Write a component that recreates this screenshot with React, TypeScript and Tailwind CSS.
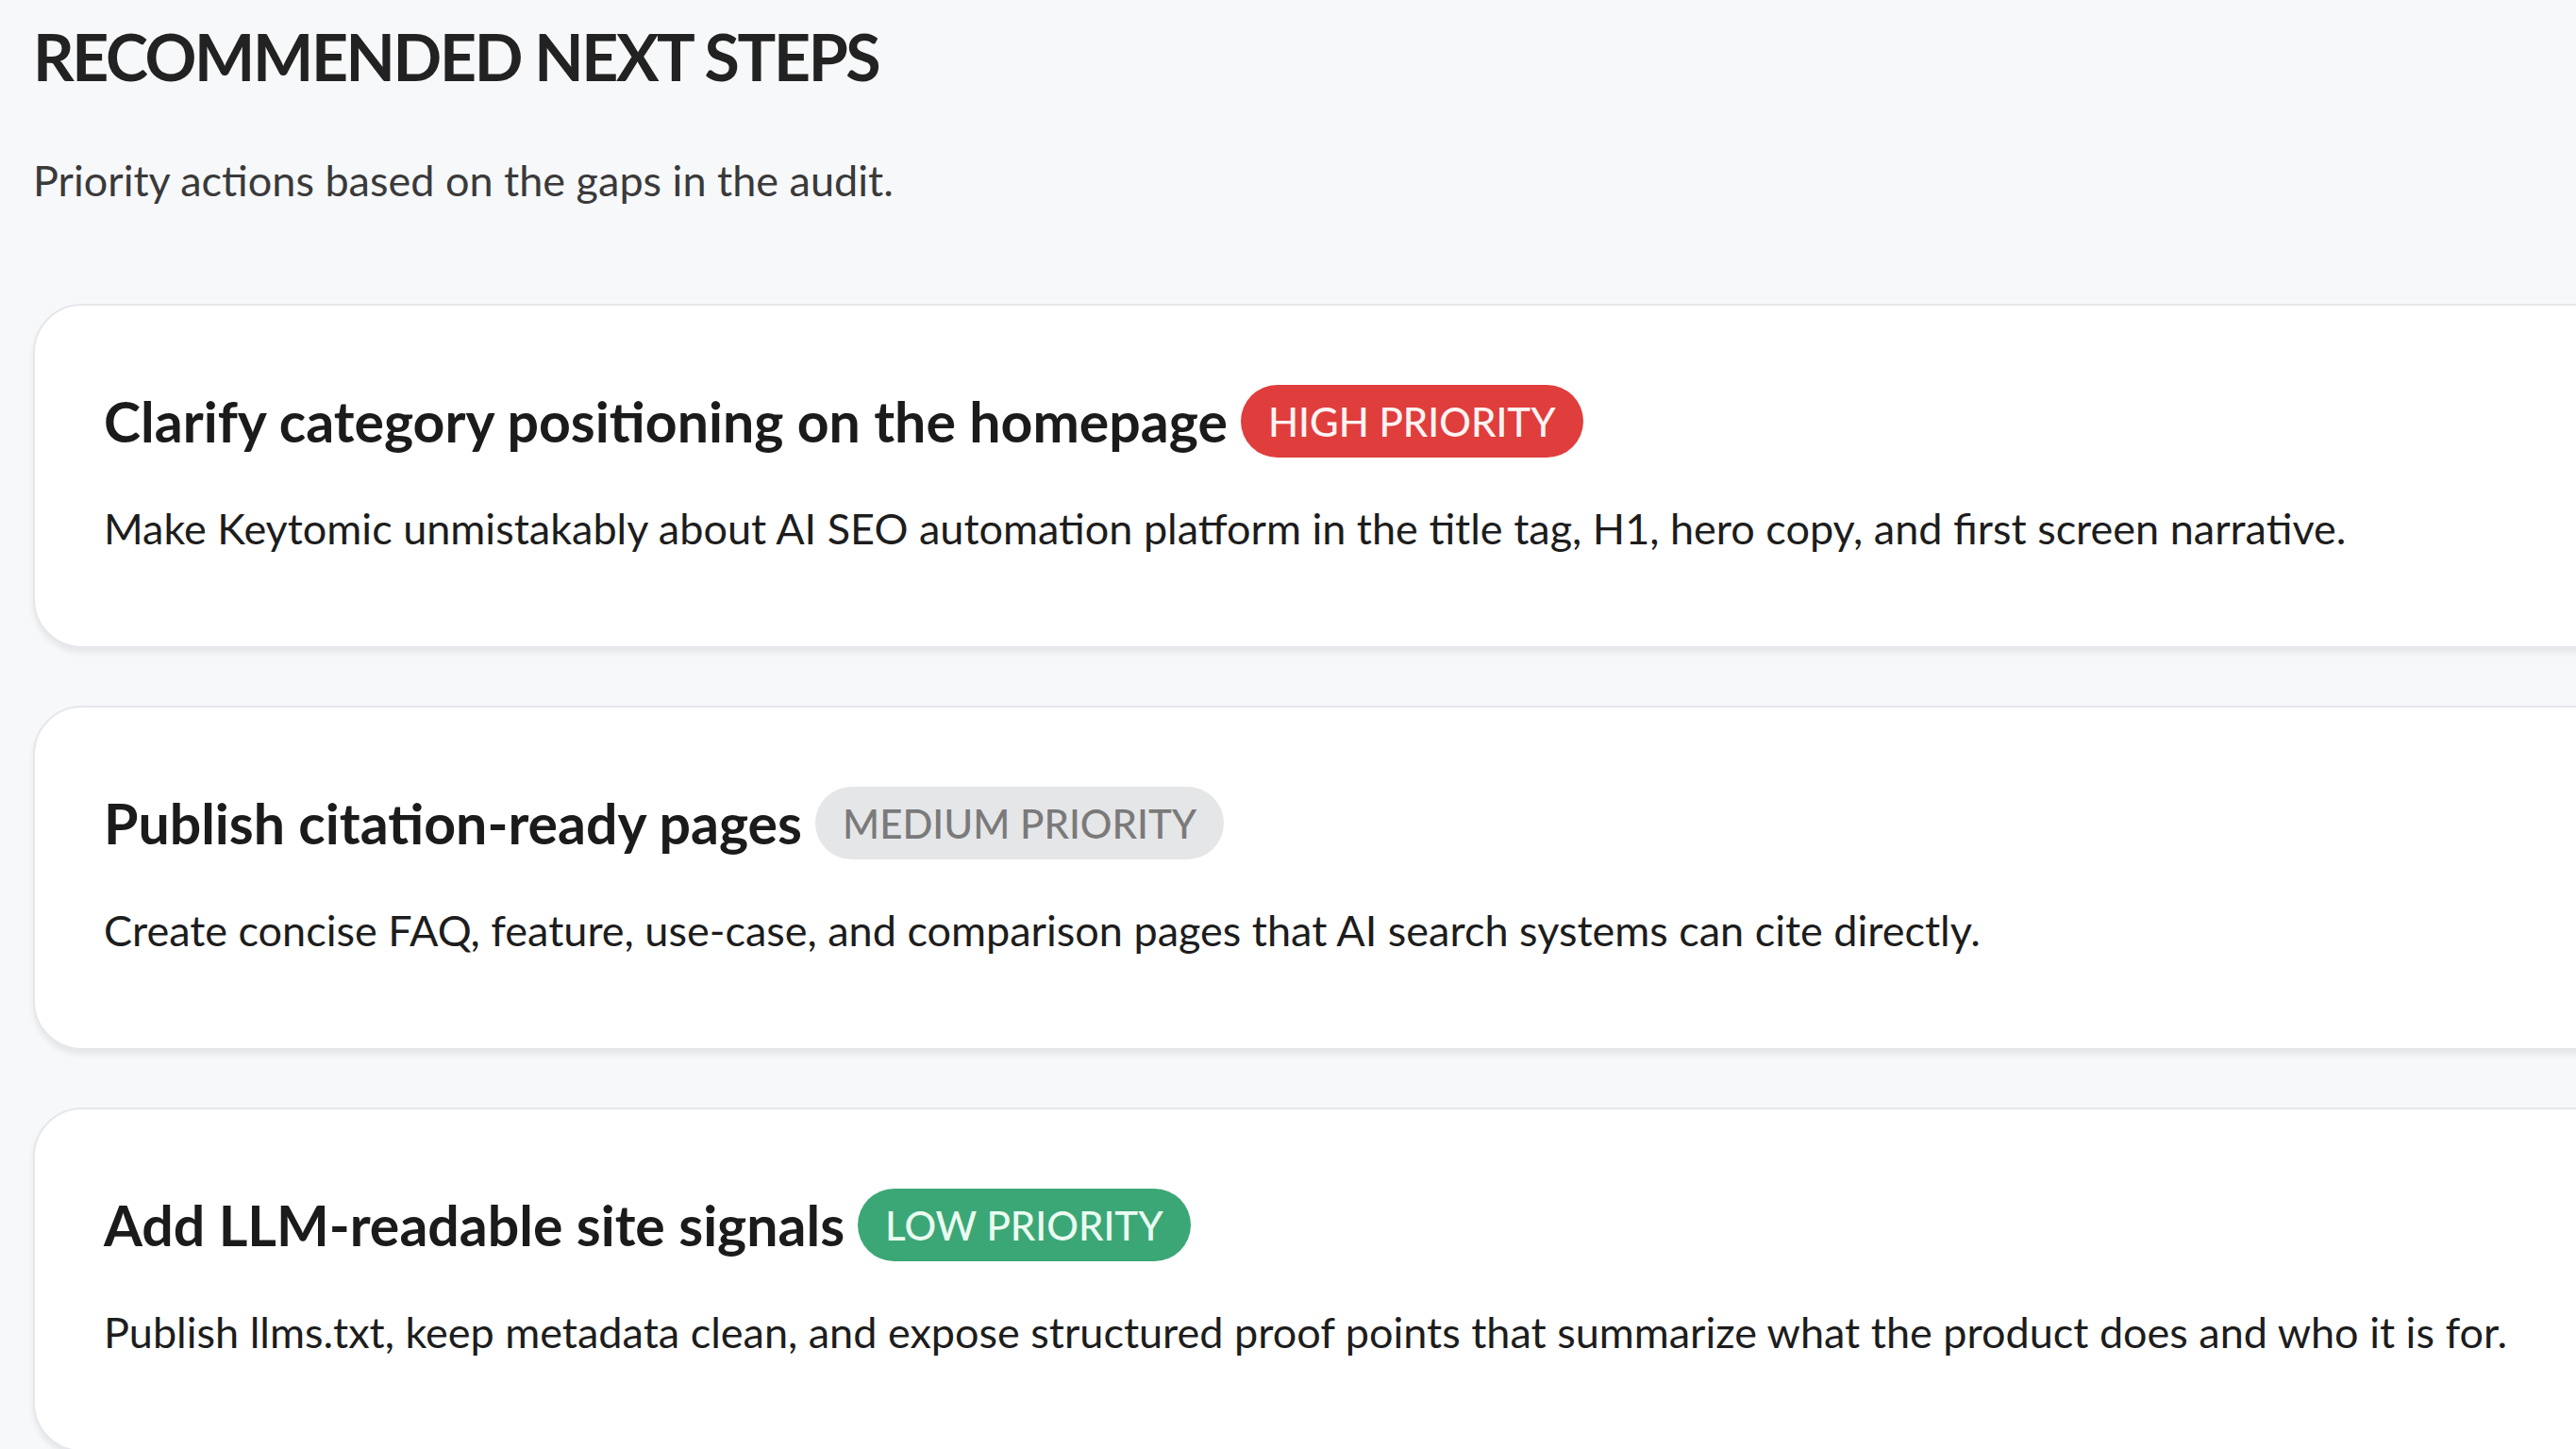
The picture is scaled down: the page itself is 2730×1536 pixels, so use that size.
import React from 'react';

type Priority = 'high' | 'medium' | 'low';

interface Step {
  title: string;
  body: string;
  priority: Priority;
}

const steps: Step[] = [
  {
    title: 'Clarify category positioning on the homepage',
    body: 'Make Keytomic unmistakably about AI SEO automation platform in the title tag, H1, hero copy, and first screen narrative.',
    priority: 'high',
  },
  {
    title: 'Publish citation-ready pages',
    body: 'Create concise FAQ, feature, use-case, and comparison pages that AI search systems can cite directly.',
    priority: 'medium',
  },
  {
    title: 'Add LLM-readable site signals',
    body: 'Publish llms.txt, keep metadata clean, and expose structured proof points that summarize what the product does and who it is for.',
    priority: 'low',
  },
];

const badgeStyles: Record<Priority, { label: string; className: string }> = {
  high: { label: 'HIGH PRIORITY', className: 'bg-[#e03d3d] text-[#fff3f3]' },
  medium: { label: 'MEDIUM PRIORITY', className: 'bg-[#e5e6e8] text-[#7a7a7a]' },
  low: { label: 'LOW PRIORITY', className: 'bg-[#3ca776] text-[#eafcf1]' },
};

function PriorityBadge({ priority }: { priority: Priority }) {
  const badge = badgeStyles[priority];
  return (
    <span
      className={`inline-flex h-[77px] shrink-0 items-center rounded-full px-[29px] text-[42px] leading-none font-medium ${badge.className}`}
    >
      {badge.label}
    </span>
  );
}

function StepCard({ step }: { step: Step }) {
  return (
    <div className="h-[365px] rounded-[52px] border-2 border-[#e5e7eb] bg-white pl-[73px] pt-[84px] shadow-[0_5px_6px_rgba(0,0,0,0.07)]">
      <div className="flex h-[77px] items-center gap-[14px]">
        <h3 className="whitespace-nowrap text-[59px] leading-none font-bold text-[#1b1b1b]">{step.title}</h3>
        <PriorityBadge priority={step.priority} />
      </div>
      <p className="mt-[46px] whitespace-nowrap text-[45px] leading-[1.3] text-[#1d1d1d]">{step.body}</p>
    </div>
  );
}

export default function App() {
  return (
    <div className="h-[1536px] overflow-hidden bg-[#f7f8fa] font-['Lato',sans-serif]">
      <div className="pl-[35px] pt-[26px] mr-[-80px]">
        <h1 className="text-[68px] leading-none font-bold tracking-[-0.035em] text-[#222]">
          RECOMMENDED NEXT STEPS
        </h1>
        <p className="mt-[75px] text-[45px] leading-none text-[#3a3a3a]">
          Priority actions based on the gaps in the audit.
        </p>
        <div className="mt-[108px] flex flex-col gap-[61px]">
          {steps.map((step) => (
            <StepCard key={step.title} step={step} />
          ))}
        </div>
      </div>
    </div>
  );
}
